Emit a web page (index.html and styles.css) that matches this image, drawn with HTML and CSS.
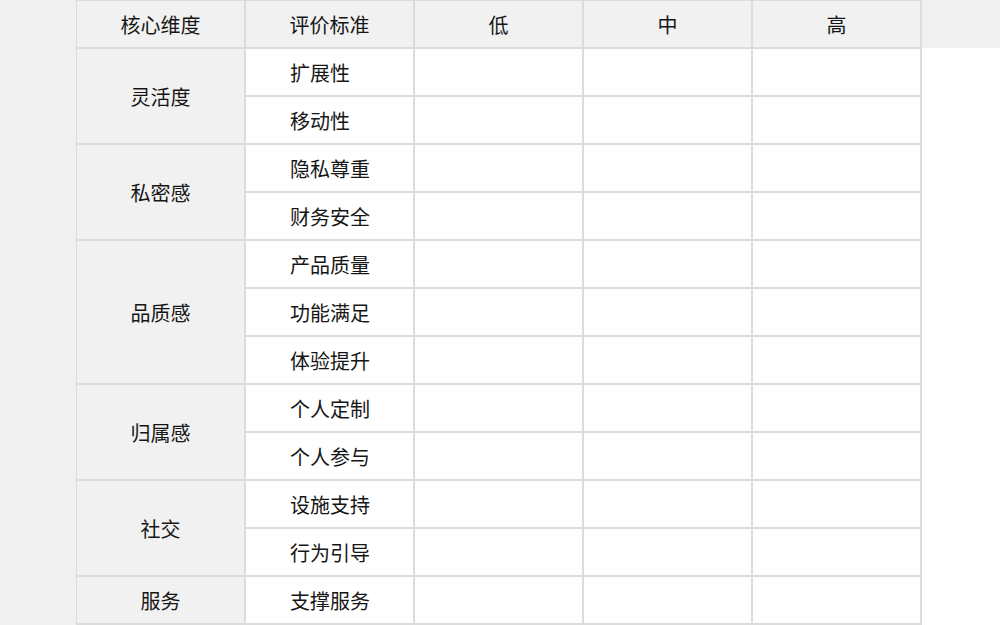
FILE: index.html
```html
<!DOCTYPE html>
<html lang="zh">
<head>
<meta charset="utf-8">
<title>核心维度评价</title>
<link rel="stylesheet" href="styles.css">
</head>
<body>
<div class="page">
  <div class="gutter"></div>
  <div class="grid">
    <div class="cell head">核心维度</div>
    <div class="cell head">评价标准</div>
    <div class="cell head">低</div>
    <div class="cell head">中</div>
    <div class="cell head">高</div>

    <div class="cell dim span2">灵活度</div>
    <div class="cell crit">扩展性</div><div class="cell"></div><div class="cell"></div><div class="cell"></div>
    <div class="cell crit">移动性</div><div class="cell"></div><div class="cell"></div><div class="cell"></div>

    <div class="cell dim span2">私密感</div>
    <div class="cell crit">隐私尊重</div><div class="cell"></div><div class="cell"></div><div class="cell"></div>
    <div class="cell crit">财务安全</div><div class="cell"></div><div class="cell"></div><div class="cell"></div>

    <div class="cell dim span3">品质感</div>
    <div class="cell crit">产品质量</div><div class="cell"></div><div class="cell"></div><div class="cell"></div>
    <div class="cell crit">功能满足</div><div class="cell"></div><div class="cell"></div><div class="cell"></div>
    <div class="cell crit">体验提升</div><div class="cell"></div><div class="cell"></div><div class="cell"></div>

    <div class="cell dim span2">归属感</div>
    <div class="cell crit">个人定制</div><div class="cell"></div><div class="cell"></div><div class="cell"></div>
    <div class="cell crit">个人参与</div><div class="cell"></div><div class="cell"></div><div class="cell"></div>

    <div class="cell dim span2">社交</div>
    <div class="cell crit">设施支持</div><div class="cell"></div><div class="cell"></div><div class="cell"></div>
    <div class="cell crit">行为引导</div><div class="cell"></div><div class="cell"></div><div class="cell"></div>

    <div class="cell dim">服务</div>
    <div class="cell crit">支撑服务</div><div class="cell"></div><div class="cell"></div><div class="cell"></div>
  </div>
  <div class="side">
    <div class="side-top"></div>
  </div>
</div>
</body>
</html>
```

FILE: styles.css
```css
* { box-sizing: border-box; }
html, body {
  margin: 0;
  padding: 0;
  background: #ffffff;
}
body {
  font-family: "Noto Sans CJK SC", "Noto Sans", sans-serif;
  color: #161616;
  width: 1000px;
  height: 625px;
  overflow: hidden;
}
.page {
  display: flex;
  align-items: flex-start;
  height: 625px;
}
.gutter {
  width: 76px;
  flex: none;
  height: 625px;
  background: #f1f1f1;
}
.grid {
  flex: none;
  display: grid;
  grid-template-columns: repeat(5, 169px);
  grid-auto-rows: 48px;
  border-top: 1px solid #dcdcdc;
  border-left: 1px solid #dcdcdc;
  background: #ffffff;
}
.cell {
  border-right: 2px solid #dcdcdc;
  border-bottom: 2px solid #dcdcdc;
  display: flex;
  align-items: center;
  justify-content: center;
  font-size: 20px;
  line-height: 1;
  padding-top: 2px;
}
.head {
  background: #f1f1f1;
}
.dim {
  background: #f1f1f1;
}
.span2 { grid-row: span 2; }
.span3 { grid-row: span 3; }
.crit {
  justify-content: flex-start;
  padding-left: 44px;
}
.side {
  flex: 1;
  height: 625px;
}
.side-top {
  height: 48px;
  background: #f1f1f1;
}
```
